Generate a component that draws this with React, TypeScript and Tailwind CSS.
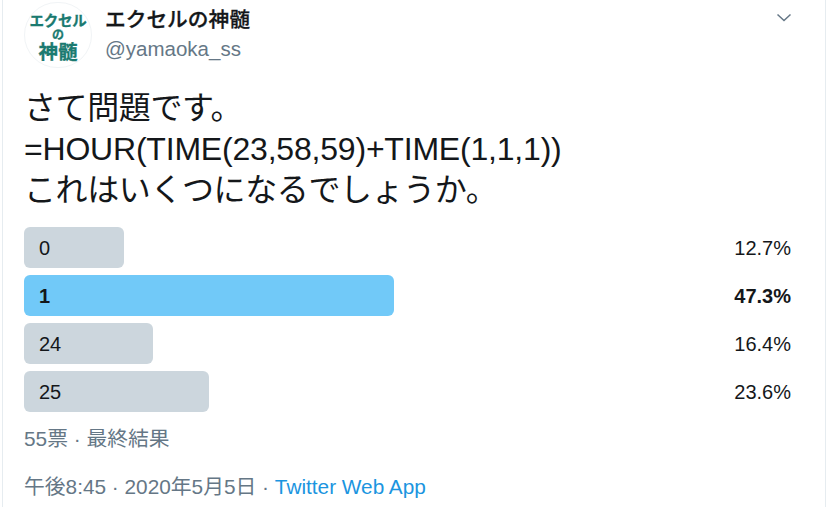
const font = { fontFamily: '"Liberation Sans","Noto Sans CJK JP",sans-serif' };

const rows = [
  { label: "0", w: "w-[100px]", pct: "12.7%", win: false },
  { label: "1", w: "w-[370px]", pct: "47.3%", win: true },
  { label: "24", w: "w-[129px]", pct: "16.4%", win: false },
  { label: "25", w: "w-[185px]", pct: "23.6%", win: false },
];

export default function App() {
  return (
    <div style={font} className="w-[828px] h-[507px] overflow-hidden bg-white">
      <div className="mx-[2px] h-full border-x border-[#e6ecf0] pl-[21px] pr-[34px] pt-[2px]">
        <div className="flex h-[66px]">
          <div className="w-[68px] h-[66px] pt-[6px] rounded-full border border-[#f1f4f6] flex flex-col items-center justify-center text-[#1a7a70] font-bold leading-none shrink-0 [-webkit-text-stroke:0.3px_#1a7a70]">
            <span className="text-[14.5px] leading-[16px] tracking-[-0.3px]">エクセル</span>
            <span className="text-[12px] leading-[13px]">の</span>
            <span className="text-[19.5px] leading-[21px]">神髄</span>
          </div>
          <div className="ml-[13px] flex flex-col">
            <span className="text-[20.7px] leading-[26px] mt-[5px] font-medium text-[#14171a] [-webkit-text-stroke:0.3px_#14171a]">エクセルの神髄</span>
            <span className="text-[20.5px] leading-[24px] mt-[4px] text-[#657786]">@yamaoka_ss</span>
          </div>
          <svg className="ml-auto mt-[8px] -mr-[1px] w-[16px] h-[16px]" viewBox="0 0 16 16" fill="none" stroke="#657786" strokeWidth="1.5">
            <path d="M1.5 4.5 L8 10.5 L14.5 4.5" />
          </svg>
        </div>
        <div className="mt-[20px] text-[32px] leading-[41px] text-[#14171a] whitespace-nowrap">
          <div className="tracking-[-0.4px]">さて問題です。</div>
          <div className="tracking-[-0.2px]">=HOUR(TIME(23,58,59)+TIME(1,1,1))</div>
          <div className="tracking-[-0.4px]">これはいくつになるでしょうか。</div>
        </div>
        <div className="mt-[16px] flex flex-col gap-[7px]">
          {rows.map((r) => (
            <div key={r.label} className="flex items-center justify-between h-[41px]">
              <div className={`${r.w} h-full rounded-[6px] flex items-center pl-[15px] text-[20px] text-[#14171a] ${r.win ? "bg-[#71c9f8] font-bold" : "bg-[#ccd6dd]"}`}>
                {r.label}
              </div>
              <span className={`text-[20px] text-[#14171a] ${r.win ? "font-bold" : ""}`}>{r.pct}</span>
            </div>
          ))}
        </div>
        <div className="mt-[14px] text-[20.8px] leading-[26px] text-[#657786]">55票 · 最終結果</div>
        <div className="mt-[22px] text-[20.8px] leading-[26px] text-[#657786] whitespace-nowrap">
          午後8:45 · 2020年5月5日 · <span className="text-[#1b95e0]">Twitter Web App</span>
        </div>
      </div>
    </div>
  );
}
